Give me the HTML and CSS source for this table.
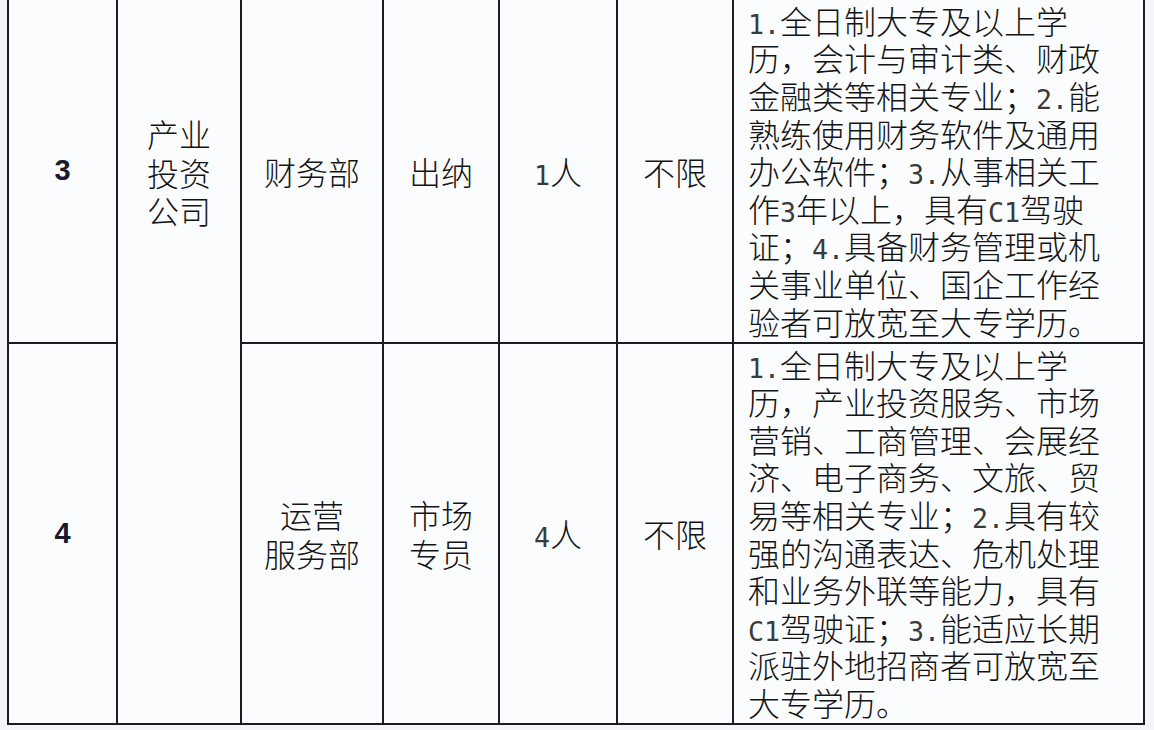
FILE: index.html
```html
<!DOCTYPE html>
<html lang="zh-CN">
<head>
<meta charset="utf-8">
<title>招聘岗位</title>
<link rel="stylesheet" href="styles.css">
</head>
<body>
<table class="jobs">
  <colgroup>
    <col class="w-no">
    <col class="w-co">
    <col class="w-dept">
    <col class="w-post">
    <col class="w-num">
    <col class="w-age">
    <col class="w-req">
  </colgroup>
  <tbody>
    <tr class="row-a">
      <td class="no">3</td>
      <td class="co" rowspan="2"><div class="co-text">产业<br>投资<br>公司</div></td>
      <td class="ctr">财务部</td>
      <td class="ctr">出纳</td>
      <td class="ctr"><span class="lt">1</span>人</td>
      <td class="ctr">不限</td>
      <td class="req"><div class="req-text"><span class="lt">1.</span>全日制大专及以上学<br>历，会计与审计类、财政<br>金融类等相关专业；<span class="lt">2.</span>能<br>熟练使用财务软件及通用<br>办公软件；<span class="lt">3.</span>从事相关工<br>作<span class="lt">3</span>年以上，具有<span class="lt">C1</span>驾驶<br>证；<span class="lt">4.</span>具备财务管理或机<br>关事业单位、国企工作经<br>验者可放宽至大专学历。</div></td>
    </tr>
    <tr class="row-b">
      <td class="no">4</td>
      <td class="ctr">运营<br>服务部</td>
      <td class="ctr">市场<br>专员</td>
      <td class="ctr"><span class="lt">4</span>人</td>
      <td class="ctr">不限</td>
      <td class="req"><div class="req-text"><span class="lt">1.</span>全日制大专及以上学<br>历，产业投资服务、市场<br>营销、工商管理、会展经<br>济、电子商务、文旅、贸<br>易等相关专业；<span class="lt">2.</span>具有较<br>强的沟通表达、危机处理<br>和业务外联等能力，具有<br><span class="lt">C1</span>驾驶证；<span class="lt">3.</span>能适应长期<br>派驻外地招商者可放宽至<br>大专学历。</div></td>
    </tr>
  </tbody>
</table>
</body>
</html>
```

FILE: styles.css
```css
html, body {
  margin: 0;
  padding: 0;
}
body {
  background: #f4f5f8;
  height: 730px;
  overflow: hidden;
}
.jobs {
  border-collapse: collapse;
  table-layout: fixed;
  width: 1138px;
  margin: -2px 0 0 7px;
  background: #fbfcfe;
  color: #141414;
  font-family: "Noto Sans CJK SC", "Noto Sans", sans-serif;
  font-weight: 300;
  font-size: 32px;
  line-height: 37.6px;
}
.w-no { width: 109px; }
.w-co { width: 124px; }
.w-dept { width: 142px; }
.w-post { width: 116px; }
.w-num { width: 118px; }
.w-age { width: 116px; }
.w-req { width: 411px; }
.jobs td {
  border: 2px solid #1b1b26;
  padding: 0;
  white-space: nowrap;
  overflow: hidden;
}
.row-a td { height: 342px; }
.row-b td { height: 379px; }
.no {
  text-align: center;
  vertical-align: middle;
  font-family: "Liberation Sans", Arial, sans-serif;
  font-weight: 700;
  font-size: 29px;
  color: #1a1a2c;
}
.ctr {
  text-align: center;
  vertical-align: middle;
  line-height: 38.5px;
}
.co {
  vertical-align: top;
  text-align: center;
  line-height: 38.5px;
}
.co-text {
  padding-top: 114px;
}
.req {
  vertical-align: middle;
}
.req-text {
  padding-left: 14px;
}
.lt {
  font-family: "DejaVu Sans Mono", "Liberation Mono", monospace;
  font-weight: 400;
  font-size: 26.6px;
  line-height: 0;
  color: #3a3a3a;
}
```
